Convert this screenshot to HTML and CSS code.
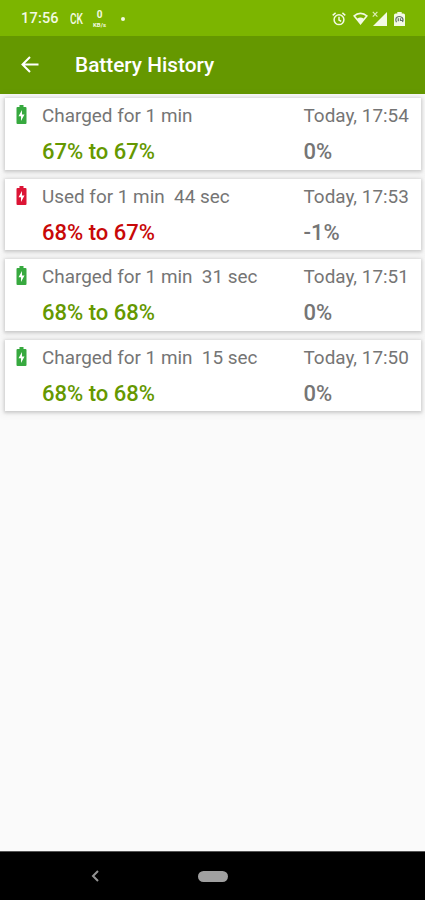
FILE: index.html
```html
<!DOCTYPE html>
<html lang="en">

<head>
    <meta charset="UTF-8">
    <meta name="viewport" content="width=device-width, initial-scale=1.0">
    <title>Battery History</title>
    <link rel="stylesheet" href="styles.css">
</head>

<body>
    <svg class="sprite" width="0" height="0">
        <symbol id="battery" viewBox="0 0 10 19">
            <path fill="currentColor" d="M3 0h4v2h2q1 0 1 1v15q0 1-1 1H1q-1 0-1-1V3q0-1 1-1h2z"/>
            <path fill="#fff" d="M5.500 5v4.500H8L4.500 16v-4.700H2z"/>
        </symbol>
    </svg>

    <div class="status-bar">
        <span class="time">17:56</span>
        <span class="carrier">CK</span>
        <span class="speed"><b>0</b><small>KB/s</small></span>
        <span class="dot"></span>
        <div class="status-icons">
            <svg width="14" height="14" viewBox="0 0 14 14" fill="none" stroke="#f3fae3" stroke-width="1.500">
                <circle cx="7" cy="7.700" r="4.900"/>
                <path d="M7 4.800v3.200l2.200 1.300M.7 3.300L3.600.9M13.300 3.300L10.400.9"/>
            </svg>
            <svg width="15" height="13" viewBox="0 0 15 13">
                <path fill="#f3fae3" fill-rule="evenodd" d="M7.500 13L0 3.700Q7.500-2.600 15 3.700zM2.300 4.100L4.300 6.600Q7.500 4.500 10.700 6.600L12.700 4.100Q7.500.3 2.300 4.100z"/>
            </svg>
            <svg width="15" height="15" viewBox="0 0 15 15">
                <path fill="#f3fae3" d="M15 1v14H1z"/>
                <path stroke="#dcedb5" stroke-width="1.200" d="M.8.800l4.600 4.800M5.400.800L.8 5.600"/>
            </svg>
            <svg class="saver" width="11" height="14" viewBox="0 0 11 14">
                <path fill="#f3fae3" d="M3.300 0h4.400v1.500h1.800Q11 1.500 11 3v11H0V3q0-1.500 1.500-1.500h1.800z"/>
                <path fill="none" stroke="#65736b" stroke-width="1.200" d="M2.500 10.300Q.9 7 3 5.300T8 5.500Q9.800 7.500 8.500 10M4.300 6.300v3M6.500 6.300v2.200h2"/>
            </svg>
        </div>
    </div>

    <header class="app-bar">
        <svg width="18" height="17" viewBox="0 0 18 17" fill="none" stroke="#fff" stroke-width="2">
            <path d="M17.500 8.500H2M9 1L1.500 8.500L9 16"/>
        </svg>
        <h1>Battery History</h1>
    </header>

    <main class="history">
        <div class="card charged">
            <svg class="battery"><use href="#battery"/></svg>
            <span class="label">Charged for 1 min</span>
            <span class="date">Today, 17:54</span>
            <span class="range">67% to 67%</span>
            <span class="diff">0%</span>
        </div>
        <div class="card used">
            <svg class="battery"><use href="#battery"/></svg>
            <span class="label">Used for 1 min&nbsp; 44 sec</span>
            <span class="date">Today, 17:53</span>
            <span class="range">68% to 67%</span>
            <span class="diff">-1%</span>
        </div>
        <div class="card charged">
            <svg class="battery"><use href="#battery"/></svg>
            <span class="label">Charged for 1 min&nbsp; 31 sec</span>
            <span class="date">Today, 17:51</span>
            <span class="range">68% to 68%</span>
            <span class="diff">0%</span>
        </div>
        <div class="card charged">
            <svg class="battery"><use href="#battery"/></svg>
            <span class="label">Charged for 1 min&nbsp; 15 sec</span>
            <span class="date">Today, 17:50</span>
            <span class="range">68% to 68%</span>
            <span class="diff">0%</span>
        </div>
    </main>

    <nav class="nav-bar">
        <svg width="8" height="12" viewBox="0 0 8 12" fill="none" stroke="#949494" stroke-width="2">
            <path d="M7 1L2 6l5 5"/>
        </svg>
        <span class="home"></span>
    </nav>
</body>

</html>
```

FILE: styles.css
```css
* {
    box-sizing: border-box;
}

body {
    margin: 0;
    height: 900px;
    display: flex;
    flex-direction: column;
    overflow: hidden;
    background: #fafafa;
    color: #757575;
    font-family: Roboto, "Liberation Sans", sans-serif;
}

.sprite {
    display: none;
}

.status-bar {
    height: 35.500px;
    flex: none;
    display: flex;
    align-items: center;
    padding: 2px 19px 0 21px;
    background: #7cb500;
    color: #f3fae3;
}

.time {
    width: 49px;
    font-size: 14.500px;
    font-weight: 500;
    letter-spacing: 0.200px;
}

.carrier {
    width: 23px;
    font-size: 14px;
    font-weight: 500;
    transform: scaleX(0.720);
    transform-origin: left;
}

.speed {
    width: 13px;
    display: flex;
    flex-direction: column;
    align-items: center;
}

.speed b {
    font-size: 10px;
    line-height: 12px;
}

.speed small {
    font-size: 6px;
    line-height: 7px;
    font-weight: 700;
}

.dot {
    width: 4px;
    height: 4px;
    margin-left: 15px;
    border-radius: 50%;
    background: #f3fae3;
}

.status-icons {
    margin-left: auto;
    display: flex;
    align-items: center;
    gap: 6px;
}

.status-icons svg:nth-child(2) {
    margin-left: 1px;
}

.status-icons svg:nth-child(3) {
    margin-left: -2px;
}

.status-icons .saver {
    margin: 0 1px 0 1px;
}

.app-bar {
    height: 58px;
    flex: none;
    display: flex;
    align-items: center;
    padding-left: 21px;
    background: #659800;
    color: #fff;
}

.app-bar h1 {
    margin: 0 0 0 36px;
    font-size: 20.800px;
    font-weight: 500;
}

.history {
    flex: 1;
    padding: 4.500px 4px 0 5px;
}

.card {
    height: 71.600px;
    margin-bottom: 9px;
    padding: 0 0 0 11px;
    display: grid;
    grid-template-columns: 26px 261.500px 1fr;
    grid-template-rows: 35.500px 36.100px;
    align-items: center;
    background: #fff;
    box-shadow: 0 1px 3px 1px rgba(0, 0, 0, 0.160), 0 0 8px 4px rgba(0, 0, 0, 0.040);
    white-space: nowrap;
}

.battery {
    width: 11px;
    height: 19px;
    margin-top: -2px;
}

.label,
.date {
    font-size: 18.900px;
}

.range,
.diff {
    font-size: 22px;
    font-weight: 500;
}

.range {
    grid-column: 2;
}

.charged .battery {
    color: #37a93f;
}

.charged .range {
    color: #659800;
}

.used .battery {
    color: #dc1435;
}

.used .range {
    color: #c80808;
}

.nav-bar {
    height: 49px;
    flex: none;
    display: flex;
    align-items: center;
    padding-left: 91px;
    border-top: 1px solid #555;
    background: #000;
}

.home {
    width: 30px;
    height: 11px;
    margin-left: 99px;
    border-radius: 6px;
    background: #a0a0a0;
}
```
